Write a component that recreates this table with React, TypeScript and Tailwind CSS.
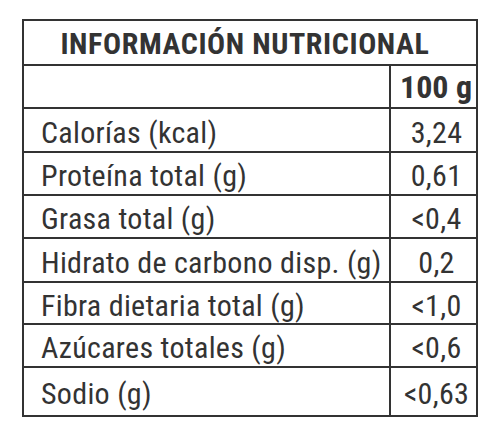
import React from "react";

const rows: { label: string; value: string; h: string }[] = [
  { label: "Calorías (kcal)", value: "3,24", h: "h-[44px]" },
  { label: "Proteína total (g)", value: "0,61", h: "h-[43px]" },
  { label: "Grasa total (g)", value: "<0,4", h: "h-[43px]" },
  { label: "Hidrato de carbono disp. (g)", value: "0,2", h: "h-[44px]" },
  { label: "Fibra dietaria total (g)", value: "<1,0", h: "h-[42px]" },
  { label: "Azúcares totales (g)", value: "<0,6", h: "h-[43px]" },
  { label: "Sodio (g)", value: "<0,63", h: "h-[47px]" },
];

export default function App() {
  return (
    <div
      className="w-[500px] h-[435px] bg-white pt-[19px] pl-[22px] text-[#333]"
      style={{ fontFamily: '"Roboto Condensed", Roboto, "Liberation Sans", sans-serif' }}
    >
      <div className="w-[456px] border-2 border-[#333] flex flex-col">
        {/* header */}
        <div className="h-[45px] border-b-2 border-[#333] flex items-center justify-center pr-[10px] pt-[2px]">
          <span className="text-[30px] font-bold leading-none tracking-[0.6px]">
            INFORMACIÓN NUTRICIONAL
          </span>
        </div>

        <div className="h-[43px] border-b-2 border-[#333] grid grid-cols-[1fr_87px]">
          <div />
          <div className="border-l-2 border-[#333] flex items-center justify-end pr-[4px]">
            <span className="text-[32px] font-bold leading-none">100 g</span>
          </div>
        </div>

        {rows.map((r, i) => (
          <div
            key={r.label}
            className={`${r.h} grid grid-cols-[1fr_87px] ${
              i < rows.length - 1 ? "border-b-2 border-[#333]" : ""
            }`}
          >
            <div className="flex items-center pl-[17px] pt-[5px] text-[30px] leading-none tracking-[0.3px]">
              {r.label}
            </div>
            <div className="border-l-2 border-[#333] flex items-center justify-center pl-[6px] pt-[5px] text-[30px] leading-none tracking-[0.3px]">
              {r.value}
            </div>
          </div>
        ))}
      </div>
    </div>
  );
}
